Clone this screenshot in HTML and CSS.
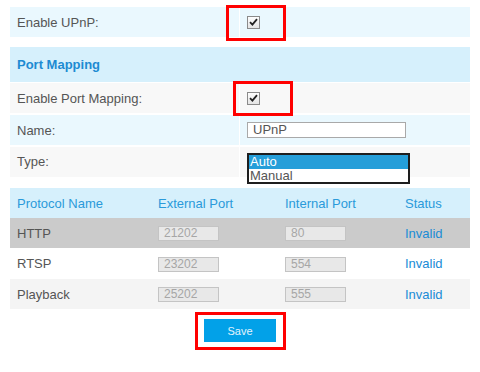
FILE: index.html
```html
<!DOCTYPE html>
<html>
<head>
<meta charset="utf-8">
<link rel="stylesheet" href="styles.css">
</head>
<body>
<div class="page">
  <div class="row row-blue first">
    <div class="label">Enable UPnP:</div>
    <div class="value"><span class="check"><svg width="9" height="8" viewBox="0 0 9 8"><path d="M1 4.2 L3.4 6.6 L8 1.2" fill="none" stroke="#222" stroke-width="1.8"/></svg></span></div>
  </div>

  <div class="section-title">Port Mapping</div>

  <div class="rows">
    <div class="row row-gray">
      <div class="label">Enable Port Mapping:</div>
      <div class="value"><span class="check"><svg width="9" height="8" viewBox="0 0 9 8"><path d="M1 4.2 L3.4 6.6 L8 1.2" fill="none" stroke="#222" stroke-width="1.8"/></svg></span></div>
    </div>
    <div class="row row-blue">
      <div class="label">Name:</div>
      <div class="value"><div class="text-input">UPnP</div></div>
    </div>
    <div class="row row-gray row-type">
      <div class="label">Type:</div>
      <div class="value">
        <div class="listbox">
          <div class="opt selected">Auto</div>
          <div class="opt">Manual</div>
        </div>
      </div>
    </div>
  </div>

  <div class="table">
    <div class="tr thead">
      <div class="c1">Protocol Name</div>
      <div class="c2">External Port</div>
      <div class="c3">Internal Port</div>
      <div class="c4">Status</div>
    </div>
    <div class="tr tr-http">
      <div class="c1">HTTP</div>
      <div class="c2"><span class="port">21202</span></div>
      <div class="c3"><span class="port">80</span></div>
      <div class="c4 status">Invalid</div>
    </div>
    <div class="tr tr-rtsp">
      <div class="c1">RTSP</div>
      <div class="c2"><span class="port">23202</span></div>
      <div class="c3"><span class="port">554</span></div>
      <div class="c4 status">Invalid</div>
    </div>
    <div class="tr tr-play">
      <div class="c1">Playback</div>
      <div class="c2"><span class="port">25202</span></div>
      <div class="c3"><span class="port">555</span></div>
      <div class="c4 status">Invalid</div>
    </div>
  </div>

  <div class="actions">
    <button class="save">Save</button>
  </div>

  <div class="mark mark1"></div>
  <div class="mark mark2"></div>
  <div class="mark mark3"></div>
</div>
</body>
</html>
```

FILE: styles.css
```css
html, body {
  margin: 0;
  padding: 0;
  background: #fff;
}
.page {
  position: relative;
  width: 460px;
  min-height: 365px;
  padding: 7px 10px 0 10px;
  font-family: "Liberation Sans", Arial, sans-serif;
  font-size: 13px;
  color: #555;
}
.row {
  display: flex;
  height: 30px;
  align-items: stretch;
}
.row-blue { background: #eaf8fe; }
.row-gray { background: #f8f8f8; }
.label {
  width: 230px;
  padding-left: 7px;
  box-sizing: border-box;
  display: flex;
  align-items: center;
  border-right: 1px solid #fff;
}
.value {
  flex: 1;
  padding-left: 7px;
  display: flex;
  align-items: center;
}
.check {
  display: inline-flex;
  align-items: center;
  justify-content: center;
  width: 11px;
  height: 11px;
  border: 1px solid #8a8a8a;
  background: linear-gradient(#fdfdfd, #e4e4e4);
}
.section-title {
  margin-top: 10px;
  height: 35px;
  display: flex;
  align-items: center;
  padding-left: 7px;
  background: #d6f0fc;
  color: #1d8bd2;
  font-weight: bold;
}
.rows {
  display: flex;
  flex-direction: column;
  gap: 2px;
  margin-top: 1px;
}
.text-input {
  width: 152px;
  height: 14px;
  border: 1px solid #a9a9a9;
  background: #fff;
  padding-left: 5px;
  line-height: 14px;
  color: #555;
}
.row-type .value {
  align-items: flex-start;
  padding-top: 6px;
}
.row-type .label { align-items: center; padding-bottom: 2px; }
.listbox {
  width: 159px;
  border: 2px solid #1e1e1e;
  background: #fff;
  position: relative;
  z-index: 1;
}
.opt {
  height: 13.5px;
  line-height: 13px;
  padding-left: 1px;
  color: #555;
}
.opt.selected {
  background: #259ed9;
  color: #fff;
}
.table {
  margin-top: 11px;
}
.tr {
  display: flex;
  height: 30px;
  align-items: center;
}
.tr-rtsp { height: 31px; }
.thead { background: #d6f0fc; color: #2a9ada; }
.tr-http { background: #cbcbcb; }
.tr-rtsp { background: #fff; }
.tr-play { background: #f4f4f4; }
.c1 { width: 141px; padding-left: 7px; box-sizing: border-box; }
.c2 { width: 127px; padding-left: 7px; box-sizing: border-box; }
.c3 { width: 120px; padding-left: 7px; box-sizing: border-box; }
.c4 { flex: 1; padding-left: 7px; box-sizing: border-box; }
.port {
  display: inline-block;
  width: 54px;
  height: 13px;
  border: 1px solid #c4c4c4;
  background: #e8e8e8;
  color: #a6a6a6;
  font-size: 12px;
  line-height: 13px;
  padding-left: 5px;
  vertical-align: middle;
}
.status { color: #1a8bd6; }
.actions {
  display: flex;
  justify-content: center;
  padding-top: 10px;
}
.save {
  width: 72px;
  height: 23px;
  border: none;
  background: #02a1e8;
  color: #e2f4fd;
  font-family: "Liberation Sans", Arial, sans-serif;
  font-size: 11px;
  padding: 0;
}
.mark {
  position: absolute;
  border: 3px solid #ff0000;
  box-sizing: border-box;
  z-index: 2;
}
.mark1 { left: 226px; top: 5px; width: 60px; height: 36px; }
.mark2 { left: 233px; top: 81px; width: 60px; height: 35px; }
.mark3 { left: 195px; top: 312px; width: 91px; height: 38px; }
```
